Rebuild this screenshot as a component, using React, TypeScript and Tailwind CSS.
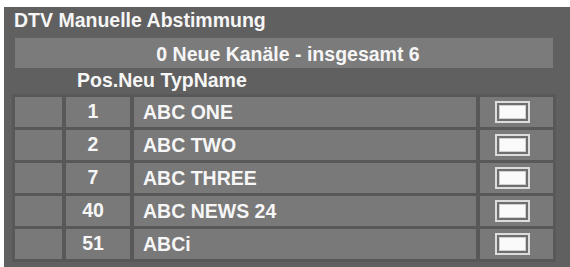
import React from "react";

const rows = [
  { pos: "1", name: "ABC ONE" },
  { pos: "2", name: "ABC TWO" },
  { pos: "7", name: "ABC THREE" },
  { pos: "40", name: "ABC NEWS 24" },
  { pos: "51", name: "ABCi" },
];

function Check() {
  return (
    <div className="w-[35px] h-[22px] border-2 border-[#dcdcdc] p-[2px] bg-[#6e6e6e]">
      <div className="w-full h-full bg-[#fafafa] border border-[#d0d0d0]" />
    </div>
  );
}

export default function App() {
  return (
    <div
      className="w-[570px] h-[267px] bg-white overflow-hidden"
      style={{ fontFamily: '"Liberation Sans", Arial, sans-serif' }}
    >
      <div className="ml-[4px] mt-[7px] h-[260px] bg-[#606060] text-[#f6f6f6] font-bold text-[19.5px] leading-[22px] flex flex-col">
        <div className="h-[31px] pl-[10px] pt-[2px]">DTV Manuelle Abstimmung</div>
        <div className="ml-[11px] w-[538px] h-[30px] bg-[#7b7b7b] flex items-center justify-center pt-[1px] pl-[8px]">
          0 Neue Kanäle - insgesamt 6
        </div>
        <div className="h-[26px] pl-[73px] pt-[1px]">Pos.Neu TypName</div>
        <div className="ml-[8px] w-[544px] bg-[#585858] p-[3px] grid grid-cols-[47px_64px_342px_73px] gap-x-[4px] gap-y-[3px]">
          {rows.map((r) => (
            <React.Fragment key={r.pos}>
              <div className="h-[30px] bg-[#797979]" />
              <div className="h-[30px] bg-[#797979] flex items-center justify-center pr-[10px] pb-[2px]">{r.pos}</div>
              <div className="h-[30px] bg-[#797979] flex items-center pl-[9px] pb-[1px]">{r.name}</div>
              <div className="h-[30px] bg-[#797979] flex items-center pl-[15px]">
                <Check />
              </div>
            </React.Fragment>
          ))}
        </div>
      </div>
    </div>
  );
}
